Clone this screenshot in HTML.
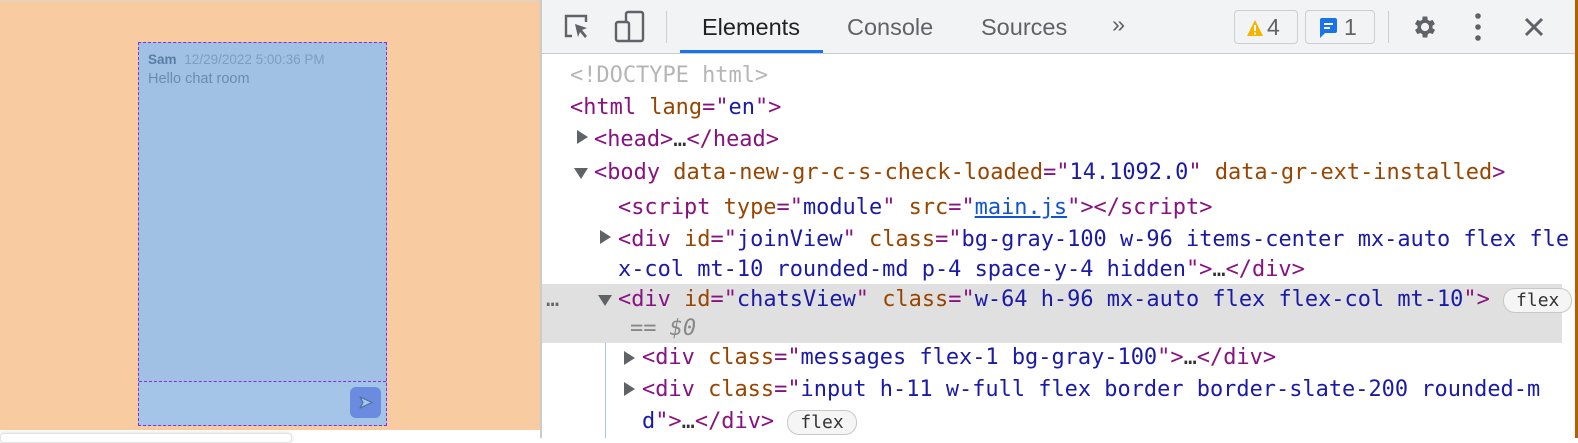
<!DOCTYPE html>
<html><head><style>
*{margin:0;padding:0;box-sizing:border-box}
body{width:1578px;height:438px;overflow:hidden;background:#fff;position:relative;font-family:"Liberation Sans",sans-serif}
#left{position:absolute;left:0;top:0;width:540px;height:430px;background:#f8cca0;border-top:1px solid #d6d6d6}
#chat{position:absolute;left:138px;top:41px;width:249px;height:384px;background:#a1c1e4;border:1px dashed #8a2be2}
#inp{position:absolute;left:0;right:0;bottom:0;height:44px;border-top:1px dashed #8a2be2;background:#a4c5e7}
#send{position:absolute;right:5px;top:5px;width:31px;height:31px;border-radius:6px;background:#6a8be0}
.tip{position:absolute;left:0;top:433px;width:292px;height:10px;background:#fff;border:1px solid #e4e4e4;border-radius:4px;box-shadow:0 0 4px rgba(0,0,0,.15)}
#dt{position:absolute;left:540px;top:0;width:1038px;height:438px;border-left:2px solid #cbcbcb;background:#fff}
#tb{position:absolute;left:0;top:0;right:0;height:54px;background:#f1f3f4;border-bottom:1px solid #cbcdd1}
.tab{position:absolute;top:14px;font-size:23.5px;color:#5f6368}
.badge{position:absolute;top:10px;height:34px;border:1px solid #cbcdd1;border-radius:4px;font-size:23px;color:#5f6368;padding:3px 8px 0 10px}
.ln{position:absolute;font-family:"DejaVu Sans Mono",monospace;font-size:21.95px;white-space:pre;line-height:32px;color:#1a1aa6}
.t{color:#881280}.a{color:#994500}.v{color:#1a1aa6}.g{color:#b5b5b5}
.tri{position:absolute;width:0;height:0}
.r{border-top:7px solid transparent;border-bottom:7px solid transparent;border-left:11px solid #5f6368}
.d{border-left:7px solid transparent;border-right:7px solid transparent;border-top:11px solid #5f6368}
.pill{display:inline-block;font-family:"DejaVu Sans Mono",monospace;font-size:18px;line-height:23px;border:1px solid #c8c8c8;border-radius:12px;padding:0 12px;color:#333;background:#f5f5f5;vertical-align:middle}
</style></head><body>
<div id="left">
 <div id="chat">
  <div style="position:absolute;left:9px;top:9px;font-size:13.5px;color:#587ca3"><b>Sam</b> <span style="color:#7e9cc2;margin-left:4px">12/29/2022 5:00:36 PM</span></div>
  <div style="position:absolute;left:9px;top:28px;font-size:14.5px;color:#6c8ab0">Hello chat room</div>
  <div id="inp"><div id="send"><svg width="31" height="31" viewBox="0 0 31 31"><path d="M10 10 L22 15.5 L10 21 L13 15.5 Z" fill="#a9c6e8" stroke="#4f6f9c" stroke-width="1.2" stroke-linejoin="round"/></svg></div></div>
 </div>
</div>
<div class="tip"></div>
<div id="dt">
 <div id="tb">
  <svg style="position:absolute;left:20px;top:12px" width="30" height="30" viewBox="0 0 30 30"><path d="M10 24H4V4h20v6" fill="none" stroke="#5f6368" stroke-width="2.4"/><path d="M13 12l12 4-5 2 5 6-2 2-5-6-2 5z" fill="#5f6368"/></svg>
  <svg style="position:absolute;left:72px;top:10px" width="32" height="34" viewBox="0 0 32 34"><rect x="12" y="2" width="17" height="29" rx="2" fill="none" stroke="#5f6368" stroke-width="2.4"/><rect x="2" y="12" width="13" height="19" rx="2" fill="#f1f3f4" stroke="#5f6368" stroke-width="2.4"/></svg>
  <div style="position:absolute;left:124px;top:11px;width:1px;height:32px;background:#cbcdd1"></div>
  <div class="tab" style="left:160px;color:#202124">Elements</div>
  <div style="position:absolute;left:138px;top:50px;width:143px;height:3px;background:#1a73e8"></div>
  <div class="tab" style="left:305px">Console</div>
  <div class="tab" style="left:439px">Sources</div>
  <div class="tab" style="left:570px;top:11px">»</div>
  <div class="badge" style="left:692px;width:64px;padding-left:11px"><svg width="18" height="18" viewBox="0 0 18 18" style="vertical-align:-2px;margin-right:3px"><path d="M9 1L17 17H1Z" fill="#f4b400"/><rect x="8" y="6" width="2" height="6" fill="#fff"/><rect x="8" y="13.5" width="2" height="2" fill="#fff"/></svg>4</div>
  <div class="badge" style="left:763px;width:70px;padding-left:12px"><svg width="20" height="22" viewBox="0 0 20 22" style="vertical-align:-4px;margin-right:6px"><path d="M3 1h14a2 2 0 0 1 2 2v11a2 2 0 0 1-2 2H7l-5 5V3a2 2 0 0 1 2-2z" fill="#1a73e8"/><rect x="6" y="6" width="9" height="2" fill="#fff"/><rect x="6" y="10" width="6" height="2" fill="#fff"/></svg>1</div>
  <div style="position:absolute;left:846px;top:11px;width:1px;height:32px;background:#cbcdd1"></div>
  <svg style="position:absolute;left:869px;top:13px" width="28" height="28" viewBox="0 0 24 24"><path fill="#5f6368" d="M19.4 13a7.5 7.5 0 0 0 0-2l2.1-1.6-2-3.5-2.5 1a7 7 0 0 0-1.7-1L15 3h-4l-.4 2.9a7 7 0 0 0-1.7 1l-2.5-1-2 3.5L6.6 11a7.5 7.5 0 0 0 0 2l-2.1 1.6 2 3.5 2.5-1a7 7 0 0 0 1.7 1L11 21h4l.4-2.9a7 7 0 0 0 1.7-1l2.5 1 2-3.5zM13 15.5a3.5 3.5 0 1 1 0-7 3.5 3.5 0 0 1 0 7z" transform="translate(-1 0)"/></svg>
  <svg style="position:absolute;left:932px;top:12px" width="8" height="30" viewBox="0 0 8 30"><circle cx="4" cy="4" r="2.8" fill="#5f6368"/><circle cx="4" cy="15" r="2.8" fill="#5f6368"/><circle cx="4" cy="26" r="2.8" fill="#5f6368"/></svg>
  <svg style="position:absolute;left:982px;top:17px" width="20" height="20" viewBox="0 0 20 20"><path d="M2 2L18 18M18 2L2 18" stroke="#5f6368" stroke-width="3"/></svg>
 </div>
 <div style="position:absolute;right:0;top:0;width:3px;height:438px;background:#b45f06"></div>
 <div style="position:absolute;left:0;top:284px;width:1020px;height:59px;background:#e0e0e0"></div>
 <div style="position:absolute;left:63px;top:343px;width:1px;height:95px;background:#a8c7f0"></div>
 <div class="ln g" style="left:28px;top:60px">&lt;!DOCTYPE html&gt;</div>
 <div class="ln" style="left:28px;top:92px"><span class="t">&lt;html</span> <span class="a">lang</span><span class="t">="</span>en<span class="t">"&gt;</span></div>
 <div class="tri r" style="left:35px;top:130px"></div>
 <div class="ln" style="left:52px;top:124px"><span class="t">&lt;head&gt;</span><span style="color:#333">…</span><span class="t">&lt;/head&gt;</span></div>
 <div class="tri d" style="left:32px;top:168px"></div>
 <div class="ln" style="left:52px;top:157px"><span class="t">&lt;body</span> <span class="a">data-new-gr-c-s-check-loaded</span><span class="t">="</span>14.1092.0<span class="t">"</span> <span class="a">data-gr-ext-installed</span><span class="t">&gt;</span></div>
 <div class="ln" style="left:76px;top:192px"><span class="t">&lt;script</span> <span class="a">type</span><span class="t">="</span>module<span class="t">"</span> <span class="a">src</span><span class="t">="</span><span style="color:#1155cc;text-decoration:underline">main.js</span><span class="t">"&gt;&lt;/script&gt;</span></div>
 <div class="tri r" style="left:58px;top:230px"></div>
 <div class="ln" style="left:76px;top:224px"><span class="t">&lt;div</span> <span class="a">id</span><span class="t">="</span>joinView<span class="t">"</span> <span class="a">class</span><span class="t">="</span>bg-gray-100 w-96 items-center mx-auto flex fle</div>
 <div class="ln" style="left:76px;top:254px">x-col mt-10 rounded-md p-4 space-y-4 hidden<span class="t">"&gt;</span><span style="color:#333">…</span><span class="t">&lt;/div&gt;</span></div>
 <div class="ln" style="left:4px;top:284px;color:#666">…</div>
 <div class="tri d" style="left:56px;top:295px"></div>
 <div class="ln" style="left:76px;top:284px"><span class="t">&lt;div</span> <span class="a">id</span><span class="t">="</span>chatsView<span class="t">"</span> <span class="a">class</span><span class="t">="</span>w-64 h-96 mx-auto flex flex-col mt-10<span class="t">"&gt;</span> <span class="pill">flex</span></div>
 <div class="ln g" style="left:88px;top:313px;color:#888;font-style:italic">== $0</div>
 <div class="tri r" style="left:82px;top:351px"></div>
 <div class="ln" style="left:100px;top:342px"><span class="t">&lt;div</span> <span class="a">class</span><span class="t">="</span>messages flex-1 bg-gray-100<span class="t">"&gt;</span><span style="color:#333">…</span><span class="t">&lt;/div&gt;</span></div>
 <div class="tri r" style="left:82px;top:382px"></div>
 <div class="ln" style="left:100px;top:374px"><span class="t">&lt;div</span> <span class="a">class</span><span class="t">="</span>input h-11 w-full flex border border-slate-200 rounded-m</div>
 <div class="ln" style="left:100px;top:406px">d<span class="t">"&gt;</span><span style="color:#333">…</span><span class="t">&lt;/div&gt;</span> <span class="pill">flex</span></div>
</div>
</body></html>
